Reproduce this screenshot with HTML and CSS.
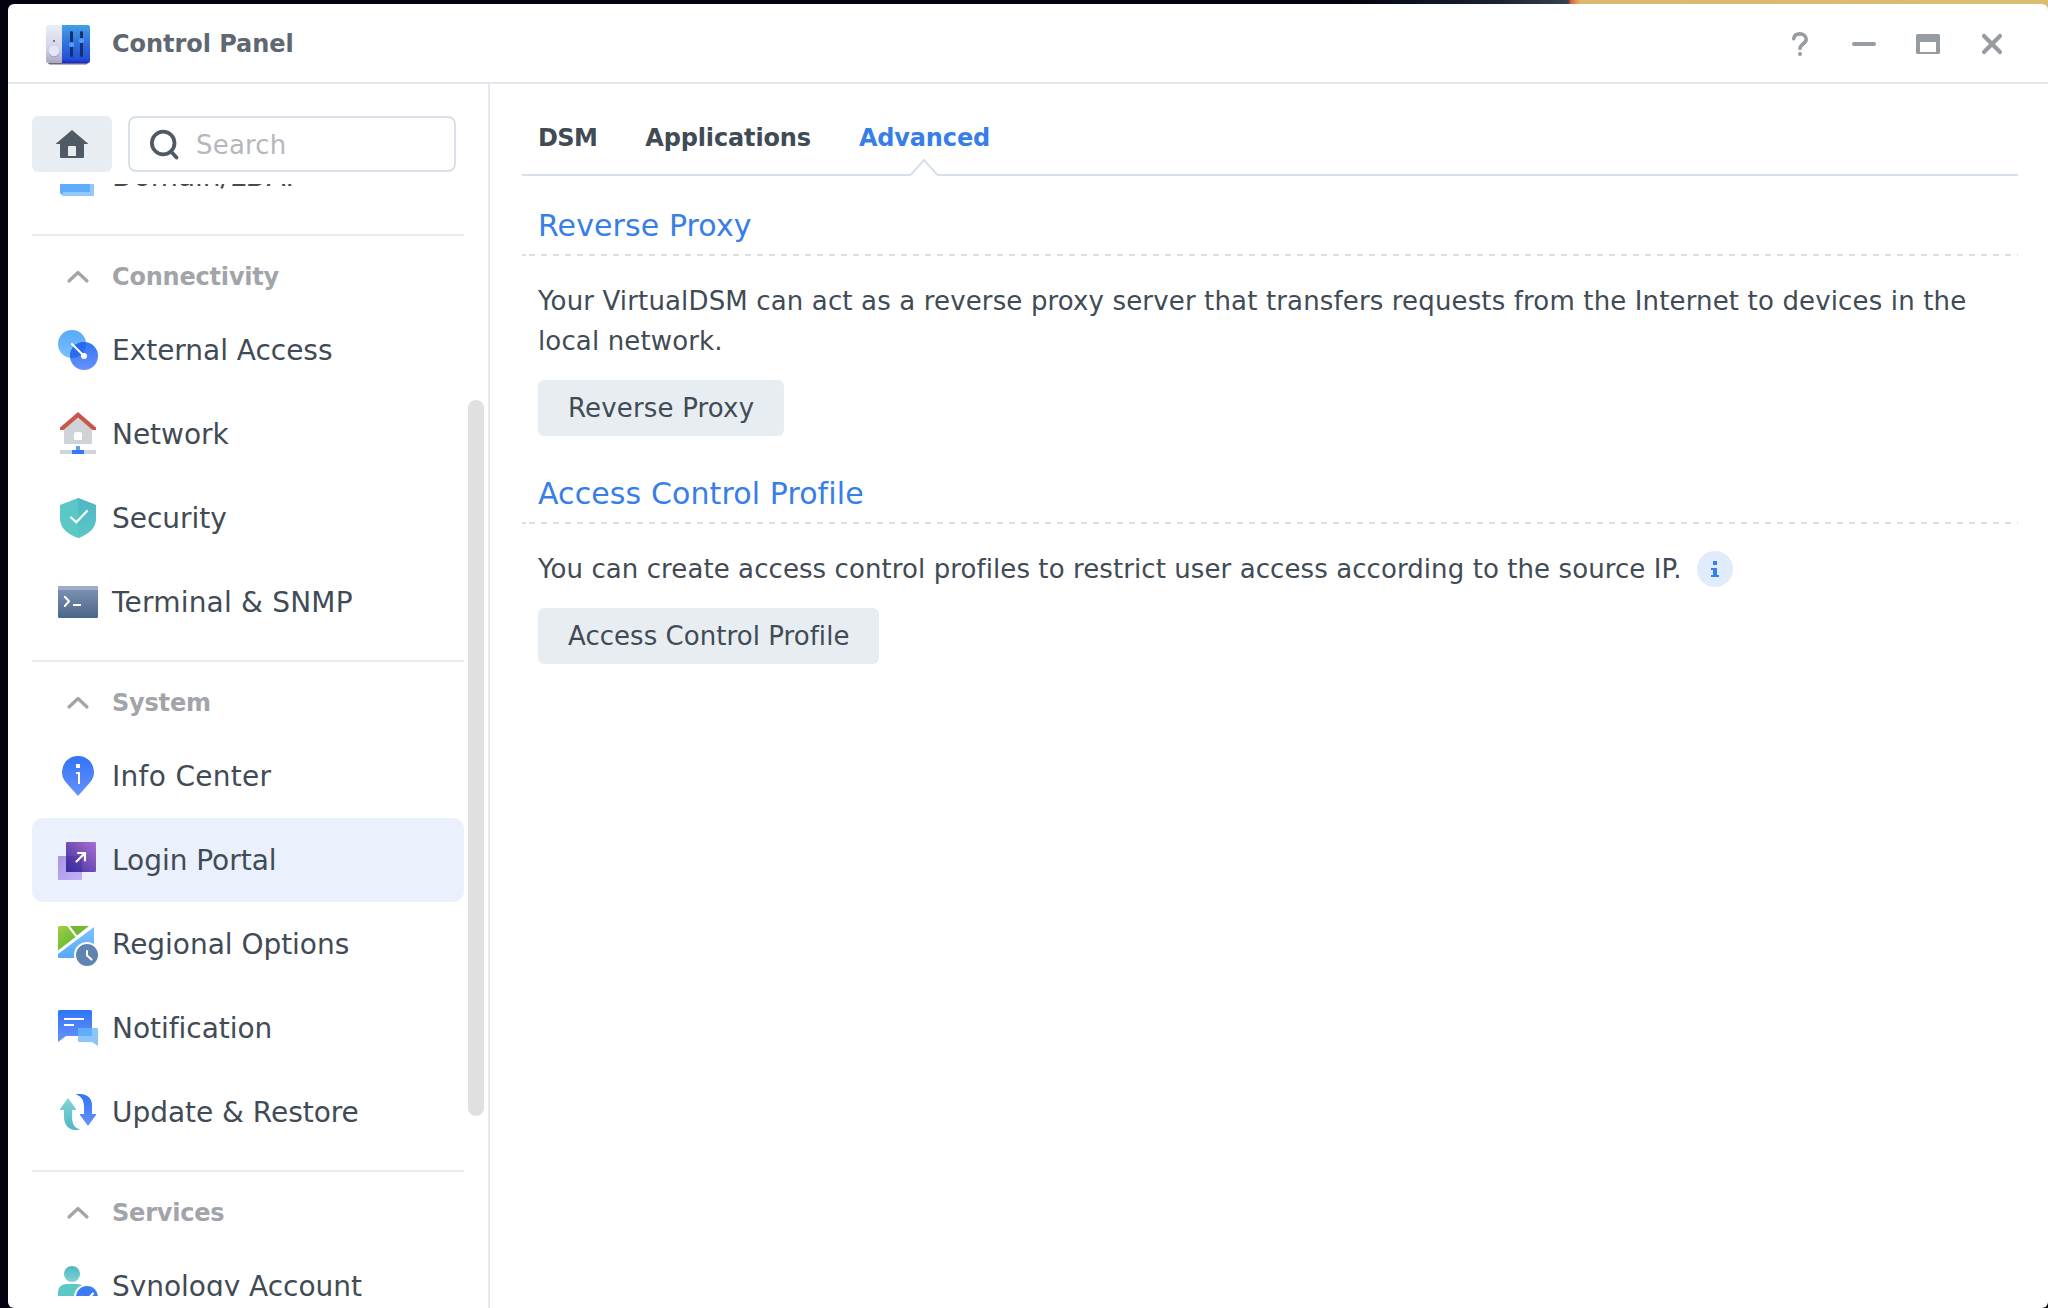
FILE: index.html
```html
<!DOCTYPE html>
<html lang="en">
<head>
<meta charset="utf-8">
<title>Control Panel</title>
<link rel="stylesheet" href="styles.css">
</head>
<body>
<div class="window">
  <header class="titlebar">
    <svg class="app-icon" width="44" height="42" viewBox="0 0 44 42">
      <defs>
        <linearGradient id="gPanel" x1="0" y1="0" x2="0" y2="1"><stop offset="0" stop-color="#44a0e6"/><stop offset=".5" stop-color="#2f6fdc"/><stop offset=".9" stop-color="#2450d4"/><stop offset="1" stop-color="#1626d8"/></linearGradient>
        <linearGradient id="gGrey" x1="0" y1="0" x2="0" y2="1"><stop offset="0" stop-color="#eaedfa"/><stop offset=".6" stop-color="#d3d4e8"/><stop offset="1" stop-color="#a9a9c4"/></linearGradient>
      </defs>
      <rect x="2" y="30" width="40" height="9.5" rx="2" fill="#3a3a48" opacity=".75"/>
      <path d="M2 0H16V38H2a2 2 0 0 1-2-2V2a2 2 0 0 1 2-2z" fill="url(#gGrey)"/>
      <path d="M16 0H42a2 2 0 0 1 2 2V36a2 2 0 0 1-2 2H16z" fill="url(#gPanel)"/>
      <rect x="7" y="15" width="2" height="2" fill="#77788a"/>
      <circle cx="8" cy="27" r="5.2" fill="#9d9eb8"/><circle cx="8" cy="26" r="5.2" fill="#e6e7f6"/>
      <rect x="24" y="6" width="3" height="26" rx="1.5" fill="#142f72"/><rect x="34" y="6" width="3" height="26" rx="1.5" fill="#142f72"/>
      <circle cx="25.5" cy="19.5" r="2.6" fill="#4d9cf8"/><circle cx="35.5" cy="15.5" r="2.6" fill="#4d9cf8"/>
    </svg>
    <h1 class="title">Control Panel</h1>
    <div class="controls">
      <svg width="24" height="24" viewBox="0 0 24 24"><path d="M5.800 6.600C6.200 3.400 8.800 1.900 12 1.900s6.200 2 6.200 5.300C18.200 12 12 12 12 16.500" fill="none" stroke="#969ca1" stroke-width="3.600" stroke-linecap="round"/><circle cx="12" cy="22" r="2" fill="#969ca1"/></svg>
      <svg width="24" height="24" viewBox="0 0 24 24"><rect y="10" width="24" height="4" rx="2" fill="#969ca1"/></svg>
      <svg width="24" height="24" viewBox="0 0 24 24"><path fill-rule="evenodd" d="M1.500 2h21A1.500 1.500 0 0 1 24 3.500v17a1.500 1.500 0 0 1-1.500 1.500h-21A1.500 1.500 0 0 1 0 20.500v-17A1.500 1.500 0 0 1 1.500 2zM4 10V20H20V10z" fill="#969ca1"/></svg>
      <svg width="24" height="24" viewBox="0 0 24 24"><path d="M4 4L20 20M20 4L4 20" stroke="#969ca1" stroke-width="4.200" stroke-linecap="round"/></svg>
    </div>
  </header>
  <div class="body">
    <aside class="sidebar">
      <div class="tools">
        <div class="home">
          <svg width="34" height="28" viewBox="0 0 34 28"><path fill-rule="evenodd" d="M17 0L33.500 14H29V27a1 1 0 0 1-1 1H6a1 1 0 0 1-1-1V14H.500zM13 17V26H21V17a1 1 0 0 0-1-1H14a1 1 0 0 0-1 1z" fill="#505a64"/></svg>
        </div>
        <div class="search">
          <svg width="30" height="32" viewBox="0 0 30 32"><circle cx="13.200" cy="14" r="11.300" fill="none" stroke="#505a64" stroke-width="3.800"/><path d="M21 22.500L26.500 28.500" stroke="#505a64" stroke-width="3.800" stroke-linecap="round"/></svg>
          <span>Search</span>
        </div>
      </div>
      <div class="scroll">
        <nav class="nav">
          <div class="item">
            <svg class="icon" viewBox="0 0 40 40"><path d="M4 10H36V39a1 1 0 0 1-1 1H5a1 1 0 0 1-1-1z" fill="#93c8fc"/><path d="M2 4H32V34.500a1.500 1.500 0 0 1-1.500 1.500H5L4 39L2 37z" fill="#5fadfa"/></svg>
            Domain/LDAP
          </div>
          <div class="heading"><svg class="chev" viewBox="0 0 24 14"><path d="M3 11L12 2.500L21 11"/></svg>Connectivity</div>
          <div class="item">
            <svg class="icon" viewBox="0 0 40 40">
              <defs><linearGradient id="gSky" x1="0" y1="0" x2="0" y2="1"><stop offset="0" stop-color="#57a9f8"/><stop offset="1" stop-color="#7cc0fb"/></linearGradient>
              <linearGradient id="gBlue" x1="0" y1="0" x2="0" y2="1"><stop offset="0" stop-color="#3074f8"/><stop offset="1" stop-color="#6891fb"/></linearGradient>
              <clipPath id="cSky"><circle cx="14" cy="14" r="14"/></clipPath></defs>
              <circle cx="14" cy="14" r="14" fill="url(#gSky)"/><circle cx="26" cy="26" r="14" fill="url(#gBlue)"/>
              <circle cx="26" cy="26" r="14" fill="#2467f0" opacity=".85" clip-path="url(#cSky)"/>
              <path d="M14 14L26 26" stroke="#fff" stroke-width="2" stroke-linecap="round"/><circle cx="26" cy="26" r="3" fill="#fff"/>
            </svg>
            External Access
          </div>
          <div class="item">
            <svg class="icon" viewBox="0 0 40 40">
              <path d="M20 3L34 15V28.500a1.500 1.500 0 0 1-1.500 1.500H7.500A1.500 1.500 0 0 1 6 28.500V15z" fill="#cfd2d7"/>
              <path d="M20-2L38 13.500V16H34.500L20 3.500L5.500 16H2V13.500z" fill="#c9564b"/>
              <path d="M16 26V20a2 2 0 0 1 2-2h4a2 2 0 0 1 2 2V26z" fill="#fff"/>
              <path d="M2 36H38V40H2z" fill="#d1d4da"/><path d="M18 32H22V36H18z" fill="#6c98fa"/><path d="M14 36H26V40H14z" fill="#3578f6"/>
            </svg>
            Network
          </div>
          <div class="item">
            <svg class="icon" viewBox="0 0 40 40">
              <defs><linearGradient id="gTeal" x1="0" y1="0" x2="0" y2="1"><stop offset="0" stop-color="#4fb5c6"/><stop offset="1" stop-color="#5ac8c5"/></linearGradient></defs>
              <path d="M20 0L38 7V20C38 30 31 36 20 40C9 36 2 30 2 20V7z" fill="#5cc8c6"/><path d="M20 0L38 7V20C38 30 31 36 20 40z" fill="url(#gTeal)"/>
              <path d="M13 19.500L18.300 24.300L29 13" fill="none" stroke="#fff" stroke-width="2.200" stroke-linecap="round"/>
            </svg>
            Security
          </div>
          <div class="item terminal">
            <svg class="icon" viewBox="0 0 40 40">
              <defs><linearGradient id="gTerm" x1="0" y1="0" x2="0" y2="1"><stop offset="0" stop-color="#8195b4"/><stop offset="1" stop-color="#4a658a"/></linearGradient></defs>
              <rect y="4" width="40" height="32" rx="1.500" fill="url(#gTerm)"/><path d="M0 8V5.500A1.500 1.500 0 0 1 1.500 4H38.500A1.500 1.500 0 0 1 40 5.500V8z" fill="#9bafcc"/>
              <path d="M6.800 14.800L11 19.300L6.800 24" fill="none" stroke="#fff" stroke-width="2" stroke-linecap="round" stroke-linejoin="round"/><path d="M15 22H23V24H15z" fill="#fff"/>
            </svg>
            Terminal &amp; SNMP
          </div>
          <div class="heading"><svg class="chev" viewBox="0 0 24 14"><path d="M3 11L12 2.500L21 11"/></svg>System</div>
          <div class="item info">
            <svg class="icon" viewBox="0 0 40 40"><path d="M20 40L8 26.500A16 16 0 1 1 32 26.500z" fill="url(#gBlue)"/><path d="M18 8H22V12H18zM18 16H22V28H20V18H18z" fill="#fff"/></svg>
            Info Center
          </div>
          <div class="item selected">
            <svg class="icon" viewBox="0 0 40 40">
              <defs><linearGradient id="gPur" x1="0" y1="1" x2="1" y2="0"><stop offset="0" stop-color="#3c2da2"/><stop offset="1" stop-color="#a970cf"/></linearGradient>
              <linearGradient id="gLil" x1="0" y1="0" x2="1" y2="1"><stop offset="0" stop-color="#a794e6"/><stop offset="1" stop-color="#c4b2f8"/></linearGradient></defs>
              <rect y="16" width="24" height="24" rx="1" fill="url(#gLil)"/><rect x="8" y="2" width="30" height="30" rx="1" fill="url(#gPur)"/>
              <path d="M8 16H24V32H9a1 1 0 0 1-1-1z" fill="#35249a" opacity=".35"/>
              <path d="M18.500 21.500L26.500 13.500M20 13H27V20.500" fill="none" stroke="#fff" stroke-width="2.200" stroke-linecap="round"/>
            </svg>
            Login Portal
          </div>
          <div class="item">
            <svg class="icon" viewBox="0 0 40 40">
              <defs><linearGradient id="gGreen" x1="0" y1="0" x2=".6" y2="1"><stop offset="0" stop-color="#a2ce43"/><stop offset="1" stop-color="#62b82f"/></linearGradient>
              <linearGradient id="gWater" x1="0" y1="1" x2="0" y2="0"><stop offset="0" stop-color="#55a9fa"/><stop offset="1" stop-color="#80c2fb"/></linearGradient></defs>
              <path d="M36 3V34H1.500A1.500 1.500 0 0 1 0 32.500V30z" fill="url(#gWater)"/><path d="M1.500 2H9L17.500 13L0 26.500V3.500A1.500 1.500 0 0 1 1.500 2z" fill="url(#gGreen)"/><path d="M12 2H31L19 11.500z" fill="#74b833"/>
              <circle cx="29" cy="31" r="13" fill="#fff"/><circle cx="29" cy="31" r="11" fill="#6084b0"/>
              <path d="M29 27V31.500L33.500 35.500" fill="none" stroke="#fff" stroke-width="2" stroke-linecap="round"/>
            </svg>
            Regional Options
          </div>
          <div class="item">
            <svg class="icon" viewBox="0 0 40 40">
              <path d="M1.500 2H32.500A1.500 1.500 0 0 1 34 3.500V28H8L0 34V3.500A1.500 1.500 0 0 1 1.500 2z" fill="url(#gBlue)"/><path d="M6 10H26V12H6zM6 16H16V18H6z" fill="#fff"/>
              <path d="M21 20H39a1 1 0 0 1 1 1V38L34 34H21a1 1 0 0 1-1-1V21a1 1 0 0 1 1-1z" fill="#8ac5fb"/><path d="M21 20H34V28H20V21a1 1 0 0 1 1-1z" fill="#62adfa"/>
            </svg>
            Notification
          </div>
          <div class="item">
            <svg class="icon" viewBox="0 0 40 40">
              <defs><linearGradient id="gUp" x1="0" y1="0" x2="0" y2="1"><stop offset="0" stop-color="#82d5d3"/><stop offset="1" stop-color="#50b6c8"/></linearGradient></defs>
              <path d="M10 6L18 17V18H14V25C14 32 17 37 23 37.600C21 38 20 38 18 38C10 38 6 32 6 25V18H2V17z" fill="url(#gUp)"/>
              <path d="M17.500 2.500C19 2 20 2 22 2C30 2 34 7 34 13V22H38V23L30 34L22 23V22H26V15C26 8 23 3.500 17.500 2.500z" fill="url(#gBlue)"/>
            </svg>
            Update &amp; Restore
          </div>
          <div class="heading"><svg class="chev" viewBox="0 0 24 14"><path d="M3 11L12 2.500L21 11"/></svg>Services</div>
          <div class="item">
            <svg class="icon" viewBox="0 0 40 40">
              <defs><linearGradient id="gHead" x1="0" y1="0" x2="0" y2="1"><stop offset="0" stop-color="#50b5c6"/><stop offset="1" stop-color="#80d4d0"/></linearGradient></defs>
              <circle cx="14" cy="8" r="8" fill="url(#gHead)"/><path d="M0 36V26C0 21 4 18 9 18H19C24 18 28 21 28 26V36z" fill="#5cc8c6"/>
              <circle cx="29" cy="31" r="13" fill="#fff"/><circle cx="29" cy="31" r="11" fill="#3b7bf7"/>
              <path d="M24 31L28 35L35 27.500" fill="none" stroke="#fff" stroke-width="2.200" stroke-linecap="round"/>
            </svg>
            Synology Account
          </div>
        </nav>
      </div>
      <div class="thumb"></div>
    </aside>
    <main class="main">
      <div class="tabs">
        <div class="tab short">DSM</div>
        <div class="tab">Applications</div>
        <div class="tab active">Advanced<svg class="caret" width="28" height="18" viewBox="0 0 28 18"><path d="M0 15.500H28V18H0z" fill="#fff"/><path d="M0 17L1 16.500L14 2L27 16.500L28 17" fill="none" stroke="#d7e0e9" stroke-width="2"/></svg></div>
      </div>
      <section class="section">
        <h2>Reverse Proxy</h2>
        <p>Your VirtualDSM can act as a reverse proxy server that transfers requests from the Internet to devices in the local network.</p>
        <button class="btn">Reverse Proxy</button>
      </section>
      <section class="section second">
        <h2>Access Control Profile</h2>
        <p class="fine">You can create access control profiles to restrict user access according to the source IP.<svg class="tip" width="36" height="36" viewBox="0 0 36 36"><circle cx="18" cy="18" r="18" fill="#e0ebfc"/><path d="M16 10H20V14H16zM14 17H20V24H22V26H14V24H16V19H14z" fill="#377ee8"/></svg></p>
        <button class="btn wide">Access Control Profile</button>
      </section>
    </main>
  </div>
</div>
</body>
</html>
```
FILE: styles.css
```css
* { box-sizing: border-box; }
body {
  margin: 0;
  height: 1308px;
  padding: 4px 0 0 8px;
  overflow: hidden;
  background: linear-gradient(90deg, #02030f 0 1350px, #1c2236 1500px, #35414f 1568px, #e0603c 1571px, #dcb86e 1580px, #d8bd72 2048px) top / 100% 12px no-repeat, #02030f;
  font-family: "DejaVu Sans", Verdana, sans-serif;
  font-variant-ligatures: none;
  color: #414b55;
}
h1, h2, p { margin: 0; font-weight: normal; }
.window {
  height: 1304px;
  display: flex;
  flex-direction: column;
  background: #fff;
  border-radius: 6px;
  overflow: hidden;
}
.titlebar {
  flex: none;
  display: flex;
  align-items: center;
  height: 80px;
  padding: 0 44px 0 38px;
  border-bottom: 2px solid #e3e9ee;
}
.app-icon { margin-top: 5px; }
.title {
  margin: 2px 0 0 22px;
  font-size: 24px;
  font-weight: bold;
  letter-spacing: -.05px;
  color: #5f6870;
}
.controls { display: flex; gap: 40px; margin-left: auto; margin-top: 2px; }
.controls svg { overflow: visible; }
.body { flex: 1; display: flex; min-height: 0; }
.sidebar {
  position: relative;
  flex: none;
  width: 482px;
  padding: 32px 24px 12px;
  border-right: 2px solid #e3e9ee;
  display: flex;
  flex-direction: column;
}
.tools { flex: none; display: flex; gap: 16px; height: 56px; margin-bottom: 12px; }
.home {
  width: 80px;
  border-radius: 6px;
  background: #e8edf2;
  display: flex;
  align-items: center;
  justify-content: center;
}
.search {
  width: 328px;
  display: flex;
  align-items: center;
  gap: 16px;
  padding: 2px 0 0 20px;
  border: 2px solid #d9e1ea;
  border-radius: 8px;
  font-size: 26px;
  letter-spacing: .2px;
  color: #b4b8bc;
}
.scroll { flex: 1; min-height: 0; overflow: hidden; }
.nav { margin-top: -50px; }
.item {
  display: flex;
  align-items: center;
  gap: 14px;
  height: 84px;
  padding-left: 26px;
  border-radius: 10px;
  font-size: 28px;
  letter-spacing: -.03px;
  white-space: nowrap;
}
.icon { width: 40px; height: 40px; overflow: visible; }
.info { letter-spacing: .3px; }
.terminal { letter-spacing: .2px; }
.selected { background: #eaf1fc; }
.heading {
  display: flex;
  align-items: center;
  gap: 22px;
  height: 74px;
  margin-top: 16px;
  padding: 10px 0 0 34px;
  border-top: 2px solid #e8edf2;
  font-size: 24px;
  font-weight: bold;
  letter-spacing: -.2px;
  color: #a1a5aa;
}
.chev { width: 24px; height: 14px; }
.chev path { fill: none; stroke: #a1a5aa; stroke-width: 3.2; stroke-linecap: round; stroke-linejoin: round; }
.thumb {
  position: absolute;
  left: 460px;
  top: 316px;
  width: 16px;
  height: 716px;
  border-radius: 8px;
  background: #e0e0e0;
}
.main { flex: 1; padding: 34px 30px 0 32px; }
.tabs {
  display: flex;
  gap: 48px;
  height: 58px;
  padding-left: 16px;
  border-bottom: 2px solid #d7e0e9;
}
.tab { position: relative; font-size: 24px; font-weight: bold; line-height: 40px; letter-spacing: -.15px; }
.tab.short { letter-spacing: -.6px; }
.tab.active { color: #377ee8; }
.caret { position: absolute; left: 50%; top: 40px; margin-left: -14px; }
.section { padding-top: 22px; }
.section.second { padding-top: 30px; }
.section h2 {
  height: 58px;
  padding-left: 16px;
  line-height: 56px;
  font-size: 30px;
  letter-spacing: .1px;
  color: #377ee8;
  background:
    linear-gradient(#d7e0e9, #d7e0e9) 0 100% / 4px 2px no-repeat,
    linear-gradient(90deg, #d7e0e9 50%, transparent 50%) 7px 100% / 12px 2px repeat-x;
}
.section p {
  margin: 25px 0 19px;
  padding-left: 16px;
  line-height: 40px;
  font-size: 26px;
  letter-spacing: .145px;
}
.section p.fine { display: flex; align-items: center; letter-spacing: .085px; }
.tip { margin-left: 15px; }
.btn {
  display: block;
  height: 56px;
  margin-left: 16px;
  padding: 0 30px;
  border: 0;
  border-radius: 6px;
  background: #e8edf2;
  font: 26px "DejaVu Sans", Verdana, sans-serif;
  letter-spacing: .17px;
  color: #414b55;
}
.btn.wide { letter-spacing: .05px; }
```
